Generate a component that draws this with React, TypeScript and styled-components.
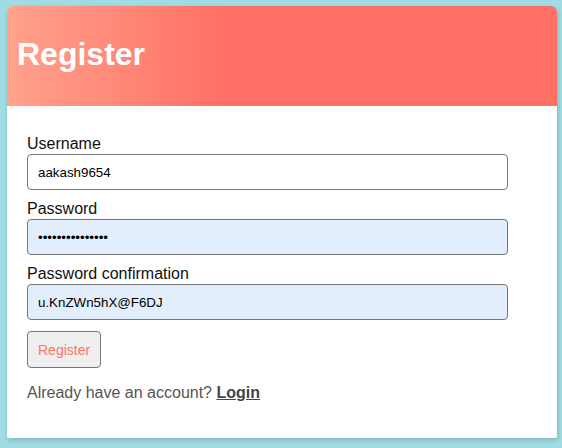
import React from 'react';
import styled, { createGlobalStyle } from 'styled-components';

const GlobalStyle = createGlobalStyle`
  html, body {
    margin: 0;
    padding: 0;
    background: #9fdce3;
    font-family: "Liberation Sans", Arial, sans-serif;
  }
`;

const Page = styled.div`
  width: 562px;
  height: 448px;
  padding: 6px 5px 0 7px;
  box-sizing: border-box;
`;

const Card = styled.div`
  width: 550px;
  height: 432px;
  background: #fff;
  border-radius: 6px 6px 2px 2px;
  overflow: hidden;
  box-shadow: 1px 2px 5px rgba(0, 0, 0, 0.18);
`;

const Header = styled.div`
  height: 100px;
  display: flex;
  align-items: center;
  padding-left: 10px;
  background: linear-gradient(to right, #ffa28d 0%, #ff6f63 40%, #ff6f63 100%);
`;

const Title = styled.h1`
  margin: 0;
  color: #fff;
  font-size: 32px;
  font-weight: 700;
  padding-bottom: 3px;
`;

const Body = styled.form`
  padding: 29px 20px 0 20px;
  display: flex;
  flex-direction: column;
  align-items: flex-start;
`;

const Field = styled.div`
  display: flex;
  flex-direction: column;
  margin-bottom: 10px;
`;

const Label = styled.label`
  font-size: 16px;
  line-height: 18px;
  color: #111;
  margin-bottom: 1px;
`;

const Input = styled.input<{ $filled?: boolean }>`
  width: 481px;
  height: 36px;
  box-sizing: border-box;
  border: 1px solid #767676;
  border-radius: 4px;
  padding: 0 10px;
  font-family: "Liberation Sans", Arial, sans-serif;
  font-size: 13.33px;
  color: #000;
  background: ${(p) => (p.$filled ? '#e3eefc' : '#fff')};
  outline: none;
`;

const Button = styled.button`
  margin-top: 1px;
  height: 37px;
  padding: 0 10px;
  background: #efefef;
  border: 1px solid #767676;
  border-radius: 4px;
  color: #ff7566;
  font-family: "Liberation Sans", Arial, sans-serif;
  font-size: 14px;
`;

const Footer = styled.p`
  margin: 16px 0 0 0;
  font-size: 16px;
  line-height: 18px;
  color: #555;
`;

const LoginLink = styled.a`
  color: #444;
  font-weight: 700;
  text-decoration: underline;
`;

const App: React.FC = () => {
  return (
    <Page>
      <GlobalStyle />
      <Card>
        <Header>
          <Title>Register</Title>
        </Header>
        <Body onSubmit={(e) => e.preventDefault()}>
          <Field>
            <Label>Username</Label>
            <Input type="text" defaultValue="aakash9654" />
          </Field>
          <Field>
            <Label>Password</Label>
            <Input type="password" defaultValue="aakash965412345" $filled />
          </Field>
          <Field>
            <Label>Password confirmation</Label>
            <Input type="text" defaultValue="u.KnZWn5hX@F6DJ" $filled />
          </Field>
          <Button type="submit">Register</Button>
          <Footer>
            Already have an account? <LoginLink href="#">Login</LoginLink>
          </Footer>
        </Body>
      </Card>
    </Page>
  );
};

export default App;
